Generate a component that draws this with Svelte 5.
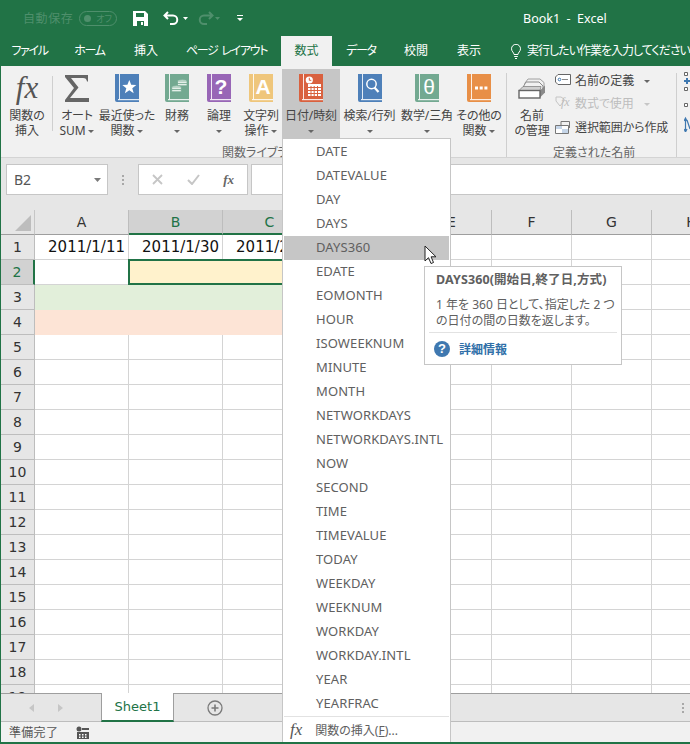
<script lang="ts">
	const tabs = [
		{ label: 'ファイル', w: 59, kana: true },
		{ label: 'ホーム', w: 61, kana: true },
		{ label: '挿入', w: 52 },
		{ label: 'ページ レイアウト', w: 109, kana: true },
		{ label: '数式', w: 51, active: true },
		{ label: 'データ', w: 58, kana: true },
		{ label: '校閲', w: 52 },
		{ label: '表示', w: 54 }
	];

	const books = [
		{ l: ['最近使った', '関数'], w: 58, color: '#4e80b9', kind: 'star', caret: 'inline' },
		{ l: ['財務'], w: 42, color: '#73a991', kind: 'coins', caret: 'below' },
		{ l: ['論理'], w: 42, color: '#9866b6', kind: '?', caret: 'below' },
		{ l: ['文字列', '操作'], w: 42, color: '#efc67b', kind: 'A', caret: 'inline' },
		{ l: ['日付/時刻'], w: 58, color: '#d9613f', kind: 'cal', caret: 'below', hover: true },
		{ l: ['検索/行列'], w: 59, color: '#4e80b9', kind: 'search', caret: 'below' },
		{ l: ['数学/三角'], w: 56, color: '#73a991', kind: 'θ', caret: 'below' },
		{ l: ['その他の', '関数'], w: 48, color: '#e88f47', kind: 'dots', caret: 'inline' }
	];

	const functions = [
		'DATE', 'DATEVALUE', 'DAY', 'DAYS', 'DAYS360', 'EDATE', 'EOMONTH', 'HOUR', 'ISOWEEKNUM',
		'MINUTE', 'MONTH', 'NETWORKDAYS', 'NETWORKDAYS.INTL', 'NOW', 'SECOND', 'TIME', 'TIMEVALUE',
		'TODAY', 'WEEKDAY', 'WEEKNUM', 'WORKDAY', 'WORKDAY.INTL', 'YEAR', 'YEARFRAC'
	];

	const columns = ['A', 'B', 'C', 'D', 'E', 'F', 'G', 'H'];
	const plainRows = Array.from({ length: 15 }, (_, i) => i + 5);
	const rightCols = ['E', 'F', 'G', 'H'];
</script>

{#snippet book(color, kind)}
	<svg class="book" width="24" height="28" viewBox="0 0 24 28">
		<path d="M0 0h24v28H2a2 2 0 0 1-2-2z" fill={color} />
		<rect x="4" width="1" height="25" fill="#fff" opacity="0.85" />
		<rect x="3" y="25" width="21" height="1.200" fill="#fff" opacity="0.85" />
		{#if kind === 'star'}
			<path d="M14.300 6l1.900 4.800 5.100.2-4 3.200 1.400 5-4.400-2.900-4.400 2.900 1.400-5-4-3.200 5.100-.2z" fill="#fff" />
		{:else if kind === 'coins'}
			<g fill="#e4efe9" stroke={color} stroke-width="0.7">
				<ellipse cx="17.300" cy="7" rx="4.700" ry="1.500" /><rect x="12.600" y="7" width="9.400" height="2.400" /><rect x="12.600" y="9.400" width="9.400" height="2.400" />
				<ellipse cx="11.500" cy="13" rx="4.700" ry="1.500" /><rect x="6.800" y="13" width="9.400" height="2.400" /><rect x="6.800" y="15.400" width="9.400" height="2.400" />
			</g>
		{:else if kind === 'cal'}
			<circle cx="10.300" cy="6" r="3.600" fill="#fff" />
			<path d="M10.300 3.800V6.300h2" stroke={color} fill="none" />
			<rect x="9" y="10" width="13" height="12" fill="#fff" />
			<path d="M9 13.500h13M9 16.500h13M9 19.500h13M12 12v10M15.200 12v10M18.500 12v10" stroke={color} />
		{:else if kind === 'search'}
			<circle cx="13.500" cy="10" r="4.700" fill="none" stroke="#fff" stroke-width="1.500" />
			<path d="M16.500 13.500l4 4.500" stroke="#fff" stroke-width="2.200" />
		{:else if kind === 'dots'}
			<path d="M8 12.500h3v3H8zM12.700 12.500h3v3h-3zM17.400 12.500h3v3h-3z" fill="#fff" />
		{:else}
			<text class="book-glyph" class:thin={kind === 'θ'} x="14" y="20" text-anchor="middle">{kind}</text>
		{/if}
	</svg>
{/snippet}

{#snippet caret()}
	<svg class="caret" width="6" height="3" viewBox="0 0 6 3"><path d="M0 0h6L3 3z" /></svg>
{/snippet}

<div class="window">
	<header class="titlebar">
		<span class="autosave">自動保存</span>
		<span class="toggle"><i></i><b>オフ</b></span>
		<svg class="qa-save" width="15" height="15" viewBox="0 0 15 15">
			<path d="M0 0h12l3 3v12H0z" fill="#fff" />
			<path d="M3 2h8v4H3zM4 10h7v5H4z" fill="#217346" />
			<path d="M8 11h2v3H8z" fill="#fff" />
		</svg>
		<svg class="qa-undo" width="16" height="15" viewBox="0 0 16 15">
			<path d="M5 1L1.500 4.500 5 8M2 4.500h8a4.200 4.200 0 0 1 0 8.500H7" fill="none" stroke="#fff" stroke-width="2" />
		</svg>
		<svg class="qa-caret" width="5" height="3" viewBox="0 0 5 3"><path d="M0 0h5L2.500 3z" fill="#fff" /></svg>
		<svg class="qa-redo" width="16" height="15" viewBox="0 0 16 15">
			<path d="M11 1l3.500 3.500L11 8M14 4.500H6a4.200 4.200 0 0 0 0 8.500h3" fill="none" stroke="#4f8f6c" stroke-width="2" />
		</svg>
		<svg class="qa-caret dim" width="5" height="3" viewBox="0 0 5 3"><path d="M0 0h5L2.500 3z" fill="#4f8f6c" /></svg>
		<svg class="qa-more" width="6" height="6" viewBox="0 0 6 6"><path d="M0 0h6v1H0zM0 3h6L3 6z" fill="#fff" /></svg>
		<span class="doc-title">Book1&nbsp; -&nbsp; Excel</span>
	</header>

	<nav class="tabs">
		{#each tabs as tab}
			<div class="tab" class:active={tab.active} class:kana={tab.kana} style="width: {tab.w}px">{tab.label}</div>
		{/each}
		<svg class="bulb" width="10" height="15" viewBox="0 0 10 15">
			<path d="M3 10.500C3 8.500 .5 7.500 .5 4.800a4.500 4.500 0 0 1 9 0C9.500 7.500 7 8.500 7 10.500zM3.200 12.500h3.600M4 14.500h2" fill="none" stroke="#fff" />
		</svg>
		<span class="tell-me">実行したい作業を入力してください</span>
	</nav>

	<section class="ribbon">
		<div class="ribbon-btn fx-btn">
			<span class="big-fx">fx</span>
			<span class="rb-label">関数の</span>
			<span class="rb-label">挿入</span>
		</div>
		<div class="ribbon-sep short"></div>
		<div class="ribbon-btn sum-btn">
			<svg class="book" width="24" height="28" viewBox="0 0 24 28">
				<path d="M0 1H23V7.500H22C21.500 5 20.500 4 18 4H6L13.500 13.500L5 24H24V28H0V26L9 14L0 3Z" fill="#666" />
			</svg>
			<span class="rb-label">オート</span>
			<span class="rb-label">SUM {@render caret()}</span>
		</div>

		{#each books as b}
			<div class="ribbon-btn book-btn" class:hover={b.hover} style="width: {b.w}px">
				{@render book(b.color, b.kind)}
				{#each b.l as line, i}
					<span class="rb-label">{line}{#if b.caret === 'inline' && i === b.l.length - 1}&nbsp;{@render caret()}{/if}</span>
				{/each}
				{#if b.caret === 'below'}
					<span class="rb-label">{@render caret()}</span>
				{/if}
			</div>
		{/each}

		<div class="ribbon-sep first-sep"></div>

		<div class="ribbon-btn names-btn">
			<svg class="book" width="28" height="28" viewBox="0 0 28 28">
				<path d="M7 14V9l3-4h12l4 3.500V15" fill="#f1f1f1" stroke="#a0a0a0" />
				<path d="M4 15l4-7h13l4 4v4" fill="#f1f1f1" stroke="#8a8a8a" />
				<path d="M22 23.500l5-5v-7l-5 5z" fill="#8a8a8a" />
				<path d="M1 16.500l4-4h18l-1 4z" fill="#d0d0d0" stroke="#777" stroke-width="0.700" />
				<rect x="1" y="16.500" width="21" height="7.500" fill="#fff" stroke="#666" stroke-width="1.400" />
			</svg>
			<span class="rb-label">名前</span>
			<span class="rb-label">の管理</span>
		</div>

		<div class="small-group">
			<div class="small-btn">
				<svg width="16" height="11" viewBox="0 0 16 11"><path d="M.5 3L3 .5h12.500v10H3L.5 8z" fill="#fff" stroke="#666" /><circle cx="4.500" cy="5.500" r="1.300" fill="none" stroke="#3f78b0" /><path d="M7 5.500h6" stroke="#888" /></svg>
				<span>名前の定義</span><span class="small-caret">{@render caret()}</span>
			</div>
			<div class="small-btn disabled">
				<svg width="16" height="14" viewBox="0 0 16 14"><path d="M1 1h5l3 2v2l-4 5-4-5z" fill="none" stroke="#c4c4c4" /></svg>
				<span class="fx-mini">fx</span>
				<span>数式で使用</span><span class="small-caret">{@render caret()}</span>
			</div>
			<div class="small-btn">
				<svg width="16" height="14" viewBox="0 0 16 14"><path d="M.5 5.500h13v8H.5z" fill="#fff" stroke="#777" /><path d="M1 6h6v3H1zM7 9h6v4H7z" fill="#c5d5e8" /><path d="M6 1.500h8.500V8M6 1.500V5" fill="none" stroke="#777" /></svg>
				<span>選択範囲から作成</span>
			</div>
		</div>

		<div class="ribbon-sep"></div>
		<svg class="edge-icons" width="6" height="60" viewBox="0 0 6 60">
			<path d="M.5.500h3v3h-3zM.5 15.500h3v3h-3zM.5 31.500h3v3h-3z" fill="#fff" stroke="#666" />
			<path d="M2 6h2v2h2v2H4v2H2v-2H0V8h2z" fill="#3f78b0" />
			<path d="M1.500 47v12M0 49l1.500-3 1.500 3M0 57l1.500 3 1.500-3M3 48l3 9" fill="none" stroke="#3f78b0" stroke-width="1.200" />
		</svg>

		<span class="group-label lib-label">関数ライブラリ</span>
		<span class="group-label names-label">定義された名前</span>
	</section>

	<section class="formula-bar">
		<div class="name-box">B2<svg width="7" height="4" viewBox="0 0 7 4"><path d="M0 0h7L3.500 4z" fill="#7a7a7a" /></svg></div>
		<div class="grip"><i></i><i></i><i></i></div>
		<div class="fx-buttons">
			<svg width="11" height="11" viewBox="0 0 11 11"><path d="M1 1l9 9M10 1l-9 9" stroke="#c6c6c6" stroke-width="1.800" /></svg>
			<svg width="13" height="11" viewBox="0 0 13 11"><path d="M1 6l4 4 7-9" fill="none" stroke="#c6c6c6" stroke-width="2" /></svg>
			<span class="fx-small">fx</span>
		</div>
		<div class="formula-input"></div>
	</section>

	<section class="sheet">
		<div class="corner"><svg width="16" height="16" viewBox="0 0 16 16"><path d="M16 0v16H0z" fill="#bdbdbd" /></svg></div>
		{#each columns as col}
			<div class="col-head" class:sel={col === 'B' || col === 'C' || col === 'D'}>{col}</div>
		{/each}

		<div class="row-head">1</div>
		<div class="cell date">2011/1/11</div>
		<div class="cell date">2011/1/30</div>
		<div class="cell date">2011/2/28</div>
		<div class="cell"></div>
		{#each rightCols as c}<div class="cell"></div>{/each}

		<div class="row-head sel">2</div>
		<div class="cell"></div>
		<div class="cell merged selected"></div>
		{#each rightCols as c}<div class="cell"></div>{/each}

		<div class="row-head">3</div>
		<div class="cell merged-all green"></div>
		{#each rightCols as c}<div class="cell"></div>{/each}

		<div class="row-head">4</div>
		<div class="cell merged-all peach"></div>
		{#each rightCols as c}<div class="cell"></div>{/each}

		{#each plainRows as r}
			<div class="row-head">{r}</div>
			{#each columns as c}<div class="cell"></div>{/each}
		{/each}
	</section>

	<footer class="sheet-tabs">
		<div class="nav-arrows">
			<svg width="5" height="8" viewBox="0 0 5 8"><path d="M5 0v8L0 4z" fill="#c6c6c6" /></svg>
			<svg width="5" height="8" viewBox="0 0 5 8"><path d="M0 0v8l5-4z" fill="#c6c6c6" /></svg>
		</div>
		<div class="sheet-tab">Sheet1</div>
		<svg class="add-sheet" width="16" height="16" viewBox="0 0 16 16">
			<circle cx="8" cy="8" r="7" fill="none" stroke="#7a7a7a" stroke-width="1.300" />
			<path d="M4.500 8h7M8 4.500v7" stroke="#7a7a7a" stroke-width="1.600" />
		</svg>
		<div class="grip tabs-grip"><i></i><i></i><i></i></div>
	</footer>

	<footer class="status">
		<span>準備完了</span>
		<svg width="13" height="13" viewBox="0 0 13 13">
			<circle cx="3" cy="3" r="2.500" fill="#555" />
			<path d="M6 2h7v2H6zM1 6h12v7H1z" fill="#555" />
			<path d="M3 8h1.500v1.500H3zM6 8h1.500v1.500H6zM9 8h1.500v1.500H9zM3 10.500h1.500V12H3zM6 10.500h1.500V12H6zM9 10.500h1.500V12H9z" fill="#fff" />
		</svg>
	</footer>

	<div class="menu">
		<ul>
			{#each functions as fn}
				<li class:current={fn === 'DAYS360'}>{fn}</li>
			{/each}
		</ul>
		<div class="menu-foot">
			<span class="foot-fx">fx</span>
			<span>関数の挿入(<u>F</u>)...</span>
		</div>
	</div>

	<svg class="cursor" width="15" height="21" viewBox="0 0 15 21">
		<path d="M1 1v15l3.500-3.300L7 18.500l2.500-1-2.400-5.700H12z" fill="#fff" stroke="#222" />
	</svg>

	<aside class="tooltip">
		<h4>DAYS360(開始日,終了日,方式)</h4>
		<p>1 年を 360 日として、指定した 2 つ<br />の日付の間の日数を返します。</p>
		<div class="tip-link">
			<span class="help">?</span>
			<span>詳細情報</span>
		</div>
	</aside>
</div>

<style>
	:global(body) {
		margin: 0;
		background: #fff;
	}

	.window {
		position: relative;
		display: flex;
		flex-direction: column;
		width: 690px;
		height: 744px;
		box-sizing: border-box;
		overflow: hidden;
		border-left: 1px solid #217346;
		border-bottom: 2px solid #217346;
		font-family: "Noto Sans", "Noto Sans CJK JP", sans-serif;
		font-size: 12px;
		color: #444;
		font-feature-settings: "palt";
	}

	.titlebar {
		display: flex;
		align-items: center;
		flex: 0 0 36px;
		background: #217346;
		padding-left: 23px;
		margin-left: -1px;
		white-space: nowrap;
	}

	.autosave {
		flex: none;
		color: #4f8f6c;
		width: 56px;
		letter-spacing: 0.6px;
	}

	.toggle {
		display: flex;
		flex: none;
		align-items: center;
		box-sizing: border-box;
		width: 38px;
		height: 15px;
		border: 1px solid #4f8f6c;
		border-radius: 8px;
		padding: 0 4px;
		justify-content: space-between;
		margin-right: 16px;
	}

	.toggle i {
		width: 7px;
		height: 7px;
		border-radius: 50%;
		background: #4f8f6c;
	}

	.toggle b {
		font-weight: 400;
		font-size: 9px;
		color: #4f8f6c;
	}

	.titlebar svg { flex: none; }
	.qa-save { margin-right: 15px; }
	.qa-undo { margin-right: 4px; }
	.qa-caret { margin-right: 10px; }
	.qa-caret.dim { margin-right: 17px; margin-left: 1px; }

	.doc-title {
		margin-left: 280px;
		color: #fff;
		font-size: 12.5px;
	}

	.tabs {
		display: flex;
		align-items: stretch;
		flex: 0 0 30px;
		background: #217346;
		margin-left: -1px;
		color: #fff;
		white-space: nowrap;
	}

	.tab {
		display: flex;
		flex: none;
		align-items: center;
		justify-content: center;
		padding-bottom: 2px;
		box-sizing: border-box;
	}

	.tab.kana {
		letter-spacing: -1.300px;
		word-spacing: 2px;
	}

	.tab.active {
		background: #f1f1f1;
		color: #217346;
	}

	.bulb {
		flex: none;
		align-self: center;
		margin-left: 15px;
		margin-right: 6px;
	}

	.tell-me {
		flex: none;
		align-self: center;
		padding-bottom: 2px;
		letter-spacing: -1px;
		color: #fff;
	}

	.ribbon {
		position: relative;
		display: flex;
		align-items: flex-start;
		flex: 0 0 92px;
		box-sizing: border-box;
		background: #f1f1f1;
		border-bottom: 1px solid #d4d4d4;
		padding: 3px 0 0 3px;
		white-space: nowrap;
	}

	.ribbon-btn {
		display: flex;
		flex: none;
		flex-direction: column;
		align-items: center;
		box-sizing: border-box;
		height: 69px;
		padding-top: 5px;
		line-height: 15px;
	}

	.ribbon-btn.hover {
		background: #c6c6c6;
	}

	.fx-btn { width: 46px; }
	.sum-btn { width: 42px; margin-left: 3px; }
	.names-btn { width: 44px; margin-left: 3px; }

	.big-fx {
		font-family: "Liberation Serif", serif;
		font-style: italic;
		font-size: 31px;
		line-height: 28px;
		height: 28px;
		margin-bottom: 6px;
		color: #555;
	}

	.book {
		flex: none;
		margin-bottom: 6px;
	}

	.book-glyph {
		font-family: "Liberation Sans", sans-serif;
		font-size: 21px;
		font-weight: 700;
		fill: #fff;
	}

	.book-glyph.thin {
		font-weight: 400;
	}

	.rb-label {
		display: block;
		height: 15px;
		letter-spacing: -0.1px;
	}

	.caret {
		vertical-align: middle;
	}

	.caret path {
		fill: #666;
	}

	.ribbon-sep {
		flex: none;
		width: 1px;
		height: 84px;
		margin-top: 4px;
		background: #cfcfcf;
	}

	.ribbon-sep.short {
		height: 55px;
		margin: 7px 0 0 2px;
	}

	.ribbon-sep.first-sep {
		margin-left: 3px;
	}

	.small-group {
		display: flex;
		flex-direction: column;
		flex: 0 0 121px;
		margin: -1px 0 0 1px;
	}

	.small-btn {
		position: relative;
		display: flex;
		align-items: center;
		gap: 4px;
		height: 23.5px;
		letter-spacing: -0.1px;
	}

	.small-btn.disabled {
		color: #bdbdbd;
	}

	.small-btn.disabled .caret path {
		fill: #c6c6c6;
	}

	.fx-mini {
		position: absolute;
		left: 6px;
		top: 3px;
		font-family: "Liberation Serif", serif;
		font-style: italic;
		font-size: 12px;
		color: #bdbdbd;
	}

	.small-caret {
		margin-left: 6px;
	}

	.edge-icons {
		flex: none;
		margin: 3px 0 0 7px;
	}

	.group-label {
		position: absolute;
		top: 79px;
		color: #666;
		line-height: 16px;
	}

	.lib-label { left: 221px; }
	.names-label { left: 552px; }

	.formula-bar {
		display: flex;
		align-items: center;
		flex: 0 0 52px;
		box-sizing: border-box;
		padding: 0 0 9px 5px;
		background: #e6e6e6;
	}

	.name-box {
		display: flex;
		align-items: center;
		justify-content: space-between;
		box-sizing: border-box;
		width: 102px;
		height: 31px;
		padding: 0 6px 0 7px;
		background: #fff;
		border: 1px solid #c6c6c6;
		font-size: 14px;
		color: #555;
	}

	.grip {
		display: flex;
		flex-direction: column;
		gap: 2px;
		margin: 0 14px;
	}

	.grip i {
		display: block;
		width: 2px;
		height: 2px;
		background: #a8a8a8;
	}

	.fx-buttons {
		display: flex;
		align-items: center;
		justify-content: space-between;
		box-sizing: border-box;
		width: 110px;
		height: 31px;
		padding: 0 13px;
		background: #fff;
		border: 1px solid #c6c6c6;
	}

	.fx-small {
		font-family: "Liberation Serif", serif;
		font-style: italic;
		font-weight: 700;
		font-size: 13px;
		color: #666;
	}

	.formula-input {
		flex: 1;
		height: 31px;
		box-sizing: border-box;
		margin-left: 3px;
		background: #fff;
		border: 1px solid #c6c6c6;
		border-right: 0;
	}

	.sheet {
		display: grid;
		grid-template-columns: 34px 94px 94px 94px 95px 80px 80px 80px 80px;
		grid-auto-rows: 25px;
		flex: 1;
		min-height: 0;
		overflow: hidden;
		background: #fff;
		font-family: "DejaVu Sans", sans-serif;
	}

	.corner {
		display: flex;
		align-items: flex-end;
		justify-content: flex-end;
		background: #e6e6e6;
		border-bottom: 1px solid #9e9e9e;
		border-right: 1px solid #c6c6c6;
		box-sizing: border-box;
		padding: 0 3px 3px 0;
	}

	.col-head {
		display: flex;
		align-items: center;
		justify-content: center;
		box-sizing: border-box;
		background: #e6e6e6;
		border-bottom: 1px solid #9e9e9e;
		border-right: 1px solid #bdbdbd;
		font-size: 14px;
		color: #333;
	}

	.col-head.sel {
		background: #d2d2d2;
		border-bottom: 2px solid #217346;
		color: #217346;
	}

	.row-head {
		display: flex;
		align-items: center;
		justify-content: center;
		box-sizing: border-box;
		background: #e6e6e6;
		border-bottom: 1px solid #bdbdbd;
		border-right: 1px solid #bdbdbd;
		font-size: 14px;
		color: #333;
	}

	.row-head.sel {
		background: #d2d2d2;
		border-right: 2px solid #217346;
		color: #217346;
	}

	.cell {
		box-sizing: border-box;
		border-right: 1px solid #d4d4d4;
		border-bottom: 1px solid #d4d4d4;
	}

	.date {
		display: flex;
		align-items: center;
		justify-content: flex-end;
		padding-right: 3px;
		font-size: 15px;
		color: #111;
		white-space: nowrap;
		overflow: hidden;
	}

	.merged { grid-column: span 3; }
	.merged-all { grid-column: span 4; }

	.selected {
		margin: -1px 0 0 -1px;
		background: #fff2cc;
		border: 2px solid #217346;
		z-index: 1;
	}

	.green { background: #e2efda; border-color: #e2efda; }
	.peach { background: #fde4d6; border-color: #fde4d6; }

	.sheet-tabs {
		display: flex;
		align-items: stretch;
		flex: 0 0 29px;
		box-sizing: border-box;
		background: #e6e6e6;
		border-top: 1px solid #9e9e9e;
		border-bottom: 1px solid #bdbdbd;
	}

	.nav-arrows {
		display: flex;
		align-items: center;
		gap: 24px;
		width: 100px;
		padding-left: 28px;
		box-sizing: border-box;
	}

	.sheet-tab {
		display: flex;
		align-items: center;
		justify-content: center;
		box-sizing: border-box;
		width: 73px;
		margin: -1px 0 -1px;
		background: #fff;
		border-left: 1px solid #9e9e9e;
		border-right: 1px solid #9e9e9e;
		border-bottom: 2px solid #217346;
		font-family: "DejaVu Sans", sans-serif;
		font-size: 13px;
		color: #217346;
	}

	.add-sheet {
		align-self: center;
		margin-left: 33px;
	}

	.tabs-grip {
		margin: 0 0 0 auto;
		padding-right: 6px;
		justify-content: center;
	}

	.status {
		display: flex;
		align-items: center;
		gap: 18px;
		flex: 0 0 20px;
		box-sizing: border-box;
		padding-left: 8px;
		background: #f1f1f1;
		color: #555;
		letter-spacing: 0.3px;
	}

	.menu {
		position: absolute;
		z-index: 2;
		left: 281px;
		top: 138px;
		bottom: -2px;
		display: flex;
		flex-direction: column;
		box-sizing: border-box;
		width: 169px;
		padding: 1px;
		background: #fff;
		border: 1px solid #c6c6c6;
	}

	.menu ul {
		list-style: none;
		margin: 0;
		padding: 0;
	}

	.menu li {
		height: 23px;
		line-height: 23px;
		padding: 0 0 1px 32px;
		font-size: 13px;
		letter-spacing: 0.1px;
		color: #606060;
		white-space: nowrap;
	}

	.menu li.current {
		background: #c6c6c6;
	}

	.menu-foot {
		display: flex;
		align-items: center;
		gap: 13px;
		height: 26px;
		padding-left: 6px;
		border-top: 1px solid #e2e2e2;
		color: #606060;
	}

	.foot-fx {
		font-family: "Liberation Serif", serif;
		font-style: italic;
		font-size: 17px;
		color: #555;
	}

	.cursor {
		position: absolute;
		z-index: 3;
		left: 423px;
		top: 245px;
	}

	.tooltip {
		position: absolute;
		z-index: 3;
		left: 423px;
		top: 266px;
		box-sizing: border-box;
		width: 198px;
		height: 99px;
		padding: 4px 4px 0;
		background: #fff;
		border: 1px solid #c6c6c6;
		color: #606060;
		white-space: nowrap;
	}

	.tooltip h4 {
		margin: 0 0 9px;
		padding-left: 7px;
		font-size: 12.5px;
		line-height: 17px;
		font-weight: 700;
		letter-spacing: 0.1px;
	}

	.tooltip p {
		margin: 0;
		padding: 0 7px;
		line-height: 16px;
		font-size: 12px;
	}

	.tip-link {
		display: flex;
		align-items: center;
		gap: 9px;
		height: 31px;
		margin-top: 3px;
		padding-left: 5px;
		border-top: 1px solid #e2e2e2;
		color: #2f6fa8;
		font-weight: 700;
	}

	.help {
		display: flex;
		align-items: center;
		justify-content: center;
		width: 16px;
		height: 16px;
		border-radius: 50%;
		background: #3f78b0;
		color: #fff;
		font-family: "Liberation Sans", sans-serif;
		font-size: 13px;
		font-weight: 700;
	}
</style>
